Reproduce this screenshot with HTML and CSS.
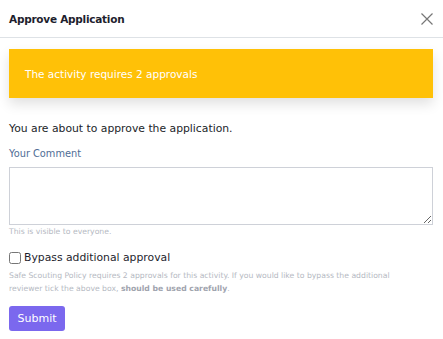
FILE: index.html
```html
<!DOCTYPE html>
<html lang="en">
<head>
  <meta charset="UTF-8" />
  <title>Approve Application</title>
  <link rel="stylesheet" href="styles.css">
</head>
<body>
  <div class="modal">
    <div class="modal-header">
      <h1 class="modal-title">Approve Application</h1>
      <button class="close-button" aria-label="Close">
        <svg width="12" height="12" viewBox="0 0 12 12">
          <path d="M0.5 0.5L11.5 11.5M11.5 0.5L0.5 11.5" stroke="#777" stroke-width="1.2" fill="none" />
        </svg>
      </button>
    </div>

    <div class="modal-body">
      <div class="alert">The activity requires 2 approvals</div>

      <p class="intro">You are about to approve the application.</p>

      <label class="field-label" for="comment">Your Comment</label>
      <textarea id="comment" class="comment"></textarea>
      <div class="help-text">This is visible to everyone.</div>

      <label class="checkbox-label">
        <input type="checkbox" id="bypass">
        Bypass additional approval
      </label>
      <div class="help-text policy">
        Safe Scouting Policy requires 2 approvals for this activity. If you would like to bypass the additional
        reviewer tick the above box, <strong>should be used carefully</strong>.
      </div>

      <button class="submit-button">Submit</button>
    </div>
  </div>
</body>
</html>
```

FILE: styles.css
```css
* {
  margin: 0;
  padding: 0;
  box-sizing: border-box;
}

body {
  font-family: 'DejaVu Sans', sans-serif;
  background-color: #fff;
  color: #212529;
}

.modal {
  width: 443px;
}

.modal-header {
  height: 38px;
  display: flex;
  align-items: center;
  justify-content: space-between;
  padding: 0 9px;
  border-bottom: 1px solid #dee2e6;
}

.modal-title {
  font-size: 10.5px;
  font-weight: 700;
  letter-spacing: -0.25px;
  color: #1e1e2d;
}

.close-button {
  background: none;
  border: none;
  width: 12px;
  height: 12px;
  margin-right: 1px;
  display: flex;
}

.modal-body {
  padding: 11px 10px 0 9px;
}

.alert {
  height: 49px;
  background-color: #ffc107;
  color: #fff;
  font-size: 10.5px;
  display: flex;
  align-items: center;
  padding-left: 16px;
  box-shadow: 0 6px 12px rgba(0, 0, 0, 0.12);
}

.intro {
  margin-top: 23px;
  font-size: 10.8px;
  line-height: 16px;
}

.field-label {
  display: block;
  margin-top: 10px;
  font-size: 9.8px;
  line-height: 14px;
  color: #4f6d96;
}

.comment {
  display: block;
  width: 100%;
  height: 58px;
  margin-top: 6px;
  border: 1px solid #ced1d8;
  resize: vertical;
  font-family: inherit;
}

.help-text {
  font-size: 7.7px;
  line-height: 13px;
  color: #b5b9c2;
}

.checkbox-label {
  display: flex;
  align-items: center;
  gap: 3px;
  margin-top: 12px;
  font-size: 10.8px;
  line-height: 16px;
  color: #1e1e2d;
}

.checkbox-label input {
  width: 12px;
  height: 12px;
  margin: 0;
}

.policy {
  max-width: 400px;
  margin-top: 3px;
}

.policy strong {
  color: #9fa4ae;
}

.submit-button {
  margin-top: 11px;
  width: 56px;
  height: 25px;
  background-color: #7b68ee;
  border: none;
  border-radius: 3px;
  color: #fff;
  font-family: inherit;
  font-size: 11px;
}
```
